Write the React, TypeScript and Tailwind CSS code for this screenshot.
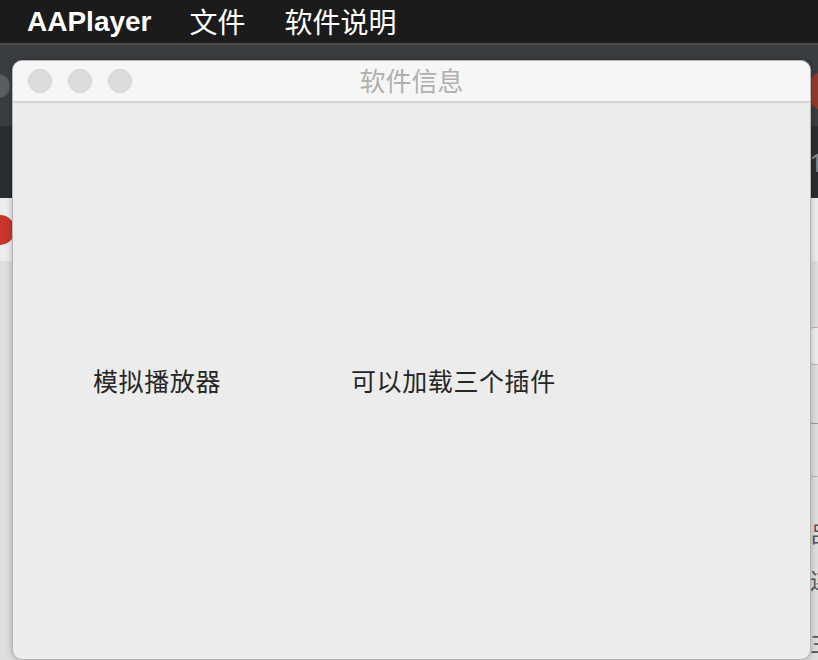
import React from "react";

const font = "font-['Noto_Sans','Noto_Sans_CJK_SC',sans-serif]";

const MenuBar: React.FC = () => (
  <div className="h-[45px] bg-[#1b1b1b] border-b-2 border-[#4a4a4a] flex items-center text-white text-[28px] leading-none">
    <span className="ml-[27px] font-bold font-['Liberation_Sans',sans-serif] text-[28px]">AAPlayer</span>
    <span className="ml-[38px]">文件</span>
    <span className="ml-[39px]">软件说明</span>
  </div>
);

const BackgroundApp: React.FC = () => (
  <div className="flex flex-col h-[615px] overflow-hidden relative">
    <div className="h-[83px] bg-[#3b3e41] flex items-center">
      <div className="w-[24px] h-[24px] rounded-full bg-[#5a5d60] -ml-[14px]" />
      <div className="ml-auto w-[30px] h-[38px] rounded-full bg-[#8e3a2c] -mr-[20px] mt-[10px]" />
    </div>
    <div className="h-[73px] bg-[#2b2e31] flex items-center justify-end">
      <span className="text-[26px] text-[#8a8d90] -mr-[6px]">1</span>
    </div>
    <div className="h-[64px] bg-[#ececec] flex items-center">
      <div className="w-[30px] h-[30px] rounded-full bg-[#c8352c] -ml-[15px]" />
    </div>
    <div className="flex-1 bg-[#dedede] flex flex-col items-end">
      <div className="mt-[66px] w-[12px] h-[38px] border border-[#d6a9ae] rounded-[3px] bg-[#ececec] -mr-[4px]" />
      <div className="mt-[58px] w-[10px] h-px bg-[#9a9a9a]" />
      <div className="mt-[52px] w-[10px] h-px bg-[#b8b8b8]" />
      <span className="mt-[40px] text-[22px] text-[#555] -mr-[14px]">吕</span>
      <span className="mt-[14px] text-[22px] text-[#555] -mr-[14px]">连</span>
      <span className="mt-[30px] text-[22px] text-[#555] -mr-[14px]">三</span>
    </div>
  </div>
);

const Light: React.FC = () => (
  <div className="w-[24px] h-[24px] rounded-full bg-[#dcdcdc] border border-[#d2d2d2]" />
);

const InfoWindow: React.FC = () => (
  <div className="absolute left-[12px] top-[60px] w-[799px] h-[600px] rounded-[10px] overflow-hidden bg-[#ececec] border border-[#b4b4b4] shadow-[0_0_6px_rgba(0,0,0,0.25)] flex flex-col">
    <div className="h-[42px] bg-[#f6f6f6] border-b-2 border-[#d4d4d4] relative flex items-center">
      <div className="flex gap-[16px] ml-[15px]">
        <Light />
        <Light />
        <Light />
      </div>
      <span className="absolute inset-x-0 text-center text-[26px] text-[#b0b0b0] leading-none">软件信息</span>
    </div>
    <div className="flex-1 flex items-center text-[25px] text-[#262626] leading-none">
      <span className="ml-[80px] tracking-[0.6px]">模拟播放器</span>
      <span className="ml-[130px] tracking-[0.6px]">可以加载三个插件</span>
    </div>
  </div>
);

const App: React.FC = () => {
  return (
    <div className={`w-[818px] h-[660px] relative overflow-hidden bg-[#ececec] ${font}`}>
      <MenuBar />
      <BackgroundApp />
      <InfoWindow />
    </div>
  );
};

export default App;
